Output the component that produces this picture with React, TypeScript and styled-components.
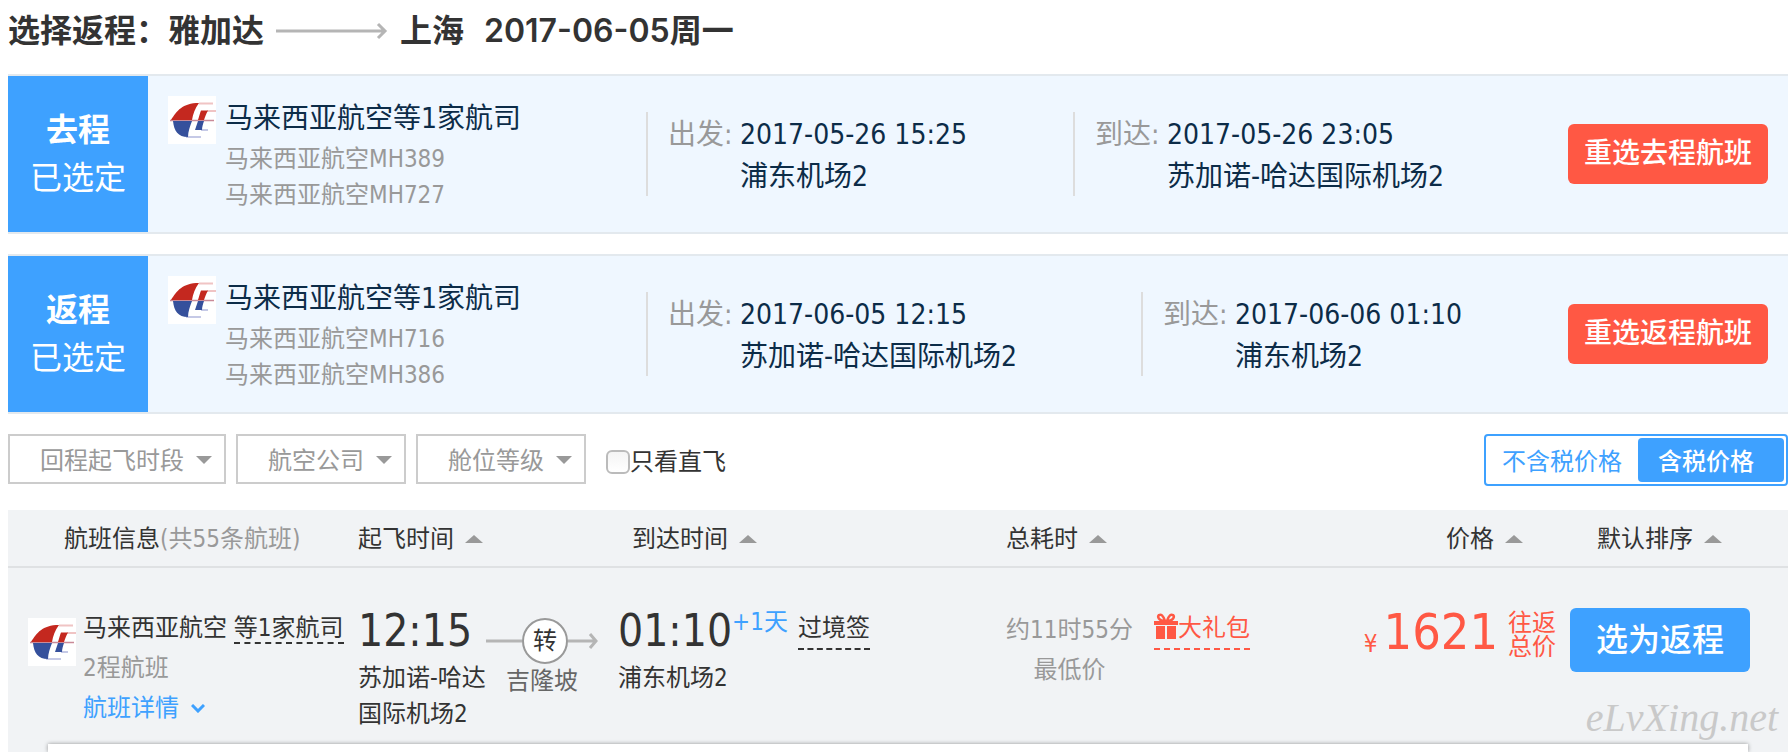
import React from 'react';
import styled, { createGlobalStyle } from 'styled-components';

const blue = '#3ea1ff';
const red = '#ff5844';
const navy = '#0c2c48';
const ink = '#333';
const muted = '#999';

const GlobalStyle = createGlobalStyle`
  * { box-sizing: border-box; }
  body {
    margin: 0;
    background: #fff;
    color: ${ink};
    font-family: 'DejaVu Sans Condensed', 'Noto Sans CJK SC', sans-serif;
    font-size: 24px;
    line-height: 36px;
  }
  button, select, input { font: inherit; margin: 0; }
  button { cursor: pointer; border: 0; }
  a { color: inherit; text-decoration: none; }
`;

const Page = styled.main`
  padding: 0 2px 0 8px;
`;

const Title = styled.h1`
  display: flex;
  align-items: center;
  gap: 12px;
  height: 62px;
  margin: 0 0 12px;
  font-family: Inter, 'Noto Sans CJK SC', sans-serif;
  font-size: 32px;
  font-weight: 600;
  white-space: nowrap;
`;

const TitleDate = styled.span`
  margin-left: 8px;
`;

const Leg = styled.section<{ $departure: number; $arrival: number }>`
  display: grid;
  grid-template-columns: 140px 498fr ${p => p.$departure}fr ${p => p.$arrival}fr 240px;
  align-items: center;
  height: 160px;
  margin-bottom: 20px;
  background: #eff7ff;
  border: solid #e3e9ee;
  border-width: 2px 0;
  color: ${navy};
  font-size: 28px;
  white-space: nowrap;
`;

const LegBadge = styled.div`
  display: flex;
  flex-direction: column;
  justify-content: center;
  height: 100%;
  background: ${blue};
  color: #fff;
  font-size: 32px;
  line-height: 48px;
  text-align: center;
`;

const Carrier = styled.div`
  display: flex;
  gap: 9px;
  padding-left: 20px;
  align-self: start;
  padding-top: 20px;
`;

const CarrierName = styled.div`
  line-height: 45px;
`;

const FlightNumber = styled.div`
  color: ${muted};
  font-size: 24px;
`;

const Stop = styled.dl`
  display: grid;
  grid-template-columns: 72px auto;
  grid-auto-rows: 42px;
  justify-content: start;
  height: 84px;
  margin: 0;
  padding: 2px 0 0 20px;
  border-left: 2px solid #ddd;
  line-height: 42px;
`;

const StopLabel = styled.dt`
  color: ${muted};
`;

const StopValue = styled.dd`
  margin: 0;
  grid-column: 2;
`;

const ReselectButton = styled.button`
  justify-self: center;
  width: 200px;
  height: 60px;
  padding: 0;
  border-radius: 6px;
  background: ${red};
  color: #fff;
  font-weight: 500;
`;

const Filters = styled.form`
  display: flex;
  align-items: flex-start;
  gap: 10px;
  margin-bottom: 20px;
`;

const SelectBox = styled.div<{ $wide?: boolean }>`
  position: relative;
  width: ${p => (p.$wide ? 218 : 170)}px;

  svg {
    position: absolute;
    right: 14px;
    top: 22px;
    pointer-events: none;
  }
`;

const Select = styled.select`
  appearance: none;
  width: 100%;
  height: 50px;
  padding: 4px 0 0 30px;
  border: 2px solid #ccc;
  border-radius: 0;
  background: #fff;
  color: ${muted};
`;

const DirectOnly = styled.label`
  display: flex;
  align-items: center;
  height: 56px;
  margin-left: 10px;
`;

const CheckBox = styled.input`
  appearance: none;
  width: 24px;
  height: 24px;
  border: 2px solid #bbb;
  border-radius: 6px;
  background: linear-gradient(#f4f4f4, #fff);

  &:checked { background: ${blue}; }
`;

const PriceMode = styled.div`
  display: flex;
  height: 52px;
  margin-left: auto;
  padding: 2px;
  border: 2px solid ${blue};
  border-radius: 4px;
`;

const PriceModeButton = styled.button<{ $active?: boolean }>`
  width: ${p => (p.$active ? 146 : 150)}px;
  padding: 3px 0 0 ${p => (p.$active ? 20 : 14)}px;
  border-radius: 4px;
  background: ${p => (p.$active ? blue : 'transparent')};
  color: ${p => (p.$active ? '#fff' : blue)};
  font-weight: ${p => (p.$active ? 500 : 400)};
  text-align: left;
`;

const Results = styled.section`
  position: relative;
  overflow: hidden;
  background: #f1f3f5;
`;

const FlightTable = styled.table`
  width: 100%;
  table-layout: fixed;
  border-collapse: separate;
  border-spacing: 0;
  white-space: nowrap;
`;

const HeadCell = styled.th<{ $indent?: number; $right?: boolean }>`
  height: 58px;
  padding: 2px ${p => (p.$right ? 39 : 0)}px 0 ${p => p.$indent ?? 0}px;
  border-bottom: 2px solid #dfe1e3;
  font-weight: 400;
  text-align: ${p => (p.$right ? 'right' : 'left')};
`;

const SortButton = styled.button`
  display: inline-flex;
  align-items: center;
  gap: 11px;
  padding: 0;
  background: none;
  color: inherit;
`;

const Count = styled.span`
  color: ${muted};
`;

const Cell = styled.td`
  height: 176px;
  padding: 40px 0 0;
  vertical-align: top;
`;

const CellRow = styled.div<{ $gap?: number; $indent?: number }>`
  display: flex;
  align-items: flex-start;
  gap: ${p => p.$gap ?? 0}px;
  padding-left: ${p => p.$indent ?? 0}px;
`;

const AirlineLogo = styled.svg`
  flex: none;
  width: 48px;
  height: 48px;
`;

const RowLogo = styled(AirlineLogo)`
  margin-top: 10px;
`;

const AirlineInfo = styled.div`
  line-height: 40px;
`;

const Dashed = styled.a<{ $tone?: string; $drop?: boolean }>`
  display: inline-block;
  color: ${p => p.$tone ?? ink};
  line-height: ${p => (p.$drop ? 40 : 28)}px;
  border-bottom: 2px dashed currentColor;
`;

const DetailsButton = styled.button`
  display: flex;
  align-items: center;
  gap: 12px;
  padding: 0;
  background: none;
  color: ${blue};
  line-height: 40px;
`;

const Time = styled.div`
  display: flex;
  align-items: flex-start;
  margin-bottom: 6px;
  font-size: 44px;
  line-height: 46px;
`;

const DayShift = styled.sup`
  color: ${blue};
  font-size: 24px;
  line-height: 28px;
`;

const Place = styled.div`
  width: 128px;
  white-space: normal;
`;

const Transfer = styled.div`
  display: flex;
  flex-direction: column;
  align-items: center;
  width: 112px;
  padding-top: 11px;
  color: #666;
`;

const TransferLine = styled.div`
  display: flex;
  align-items: center;
  height: 44px;
`;

const TransferDot = styled.span`
  display: grid;
  place-items: center;
  width: 46px;
  height: 46px;
  border: 2px solid ${muted};
  border-radius: 50%;
  background: #fff;
  color: ${ink};
`;

const Duration = styled.div`
  padding-top: 2px;
  color: ${muted};
  line-height: 40px;
  text-align: center;
`;

const Price = styled.div`
  display: flex;
  align-items: flex-start;
  justify-content: flex-end;
  padding-right: 6px;
  color: ${red};
`;

const Currency = styled.span`
  line-height: 72px;
`;

const Amount = styled.strong`
  margin: 0 10px 0 6px;
  font-size: 50px;
  font-weight: 400;
  line-height: 48px;
`;

const PriceNote = styled.span`
  width: 48px;
  padding-top: 3px;
  line-height: 24px;
  white-space: normal;
`;

const ChooseButton = styled.button`
  width: 180px;
  height: 64px;
  margin-left: 8px;
  border-radius: 6px;
  background: ${blue};
  color: #fff;
  font-size: 32px;
  font-weight: 500;
`;

const DetailsPanel = styled.div`
  height: 8px;
  margin: 0 40px;
  background: #fff;
  box-shadow: 0 0 4px rgba(0, 0, 0, 0.4);
`;

const Watermark = styled.span`
  position: absolute;
  right: 10px;
  bottom: 12px;
  color: #c9c9c9;
  font-family: 'Liberation Serif', serif;
  font-size: 40px;
  font-style: italic;
  line-height: 44px;
`;

const LogoDrawing = () => (
  <>
    <rect width="48" height="48" fill="#fff" />
    <path d="M31 7.500H45M39 15H48" stroke="#f0c4c4" strokeWidth="2" />
    <path d="M33 34H40M18 41H33" stroke="#c5c9e6" strokeWidth="2" />
    <path d="M2 24.500H46" stroke="#c98a98" strokeWidth="1.500" />
    <path d="M3 24C9 15 14 7 31 7C27 12 25 18 24 24Z" fill="#c4281f" />
    <path d="M5 25H24C22 30 20 36 20 41C10 41 6 35 5 25Z" fill="#35509c" />
    <path d="M33 14.500H40C38 18 37 21 36 24H30C31 21 32 17 33 14.500Z" fill="#c4281f" />
    <path d="M30 25H36C35 28 34 31 34 34H27C28 31 29 28 30 25Z" fill="#35509c" />
  </>
);

const LongArrow = () => (
  <svg width="112" height="20" viewBox="0 0 112 20" fill="none" stroke="#b5b5b5" strokeWidth="3">
    <path d="M0 10H109M102 3L109 10L102 17" />
  </svg>
);

const Caret = ({ up }: { up?: boolean }) => (
  <svg width={up ? 18 : 16} height="8" viewBox="0 0 16 8" preserveAspectRatio="none" fill={muted}>
    <path d={up ? 'M0 8L8 0L16 8Z' : 'M0 0L8 8L16 0Z'} />
  </svg>
);

const Gift = () => (
  <svg width="24" height="26" viewBox="0 0 24 26" fill={red}>
    <path d="M0 8H24V12H0ZM2 13H11V26H2ZM13 13H22V26H13Z" />
    <path d="M11 8C9 2 7 1 5 2C3 4 5 8 11 8ZM13 8C15 2 17 1 19 2C21 4 19 8 13 8Z" fill="none" stroke={red} strokeWidth="2.500" />
  </svg>
);

const GiftLink = styled(Dashed)`
  svg {
    display: inline-block;
    vertical-align: -3px;
  }
`;

const legs = [
  {
    name: '去程', flights: ['MH389', 'MH727'], columns: [427, 475],
    departure: ['2017-05-26 15:25', '浦东机场2'],
    arrival: ['2017-05-26 23:05', '苏加诺-哈达国际机场2'],
  },
  {
    name: '返程', flights: ['MH716', 'MH386'], columns: [495, 407],
    departure: ['2017-06-05 12:15', '苏加诺-哈达国际机场2'],
    arrival: ['2017-06-06 01:10', '浦东机场2'],
  },
];

const filters = ['回程起飞时段', '航空公司', '舱位等级'];

const columnWidths = [350, 260, 388, 340, 216, 226];

const StopInfo = ({ label, value }: { label: string; value: string[] }) => (
  <Stop>
    <StopLabel>{label}:</StopLabel>
    <StopValue>{value[0]}</StopValue>
    <StopValue>{value[1]}</StopValue>
  </Stop>
);

const Sort = ({ children }: { children: React.ReactNode }) => (
  <SortButton type="button">{children}<Caret up /></SortButton>
);

export default function App() {
  return (
    <Page>
      <GlobalStyle />
      <Title>
        <span>选择返程：雅加达</span>
        <LongArrow />
        <span>上海</span>
        <TitleDate>2017-06-05周一</TitleDate>
      </Title>

      {legs.map(leg => (
        <Leg key={leg.name} $departure={leg.columns[0]} $arrival={leg.columns[1]}>
          <LegBadge>
            <strong>{leg.name}</strong>
            <span>已选定</span>
          </LegBadge>
          <Carrier>
            <AirlineLogo viewBox="0 0 48 48"><LogoDrawing /></AirlineLogo>
            <div>
              <CarrierName>马来西亚航空等1家航司</CarrierName>
              {leg.flights.map(f => <FlightNumber key={f}>马来西亚航空{f}</FlightNumber>)}
            </div>
          </Carrier>
          <StopInfo label="出发" value={leg.departure} />
          <StopInfo label="到达" value={leg.arrival} />
          <ReselectButton type="button">重选{leg.name}航班</ReselectButton>
        </Leg>
      ))}

      <Filters>
        {filters.map((f, i) => (
          <SelectBox key={f} $wide={i === 0}>
            <Select aria-label={f}><option>{f}</option></Select>
            <Caret />
          </SelectBox>
        ))}
        <DirectOnly>
          <CheckBox type="checkbox" />
          只看直飞
        </DirectOnly>
        <PriceMode>
          <PriceModeButton type="button">不含税价格</PriceModeButton>
          <PriceModeButton type="button" $active>含税价格</PriceModeButton>
        </PriceMode>
      </Filters>

      <Results>
        <FlightTable>
          <colgroup>
            {columnWidths.map((w, i) => <col key={i} width={w} />)}
          </colgroup>
          <thead>
            <tr>
              <HeadCell $indent={56}>航班信息<Count>(共55条航班)</Count></HeadCell>
              <HeadCell><Sort>起飞时间</Sort></HeadCell>
              <HeadCell $indent={14}><Sort>到达时间</Sort></HeadCell>
              <HeadCell><Sort>总耗时</Sort></HeadCell>
              <HeadCell $right><Sort>价格</Sort></HeadCell>
              <HeadCell $indent={35}><Sort>默认排序</Sort></HeadCell>
            </tr>
          </thead>
          <tbody>
            <tr>
              <Cell>
                <CellRow $gap={7} $indent={20}>
                  <RowLogo viewBox="0 0 48 48"><LogoDrawing /></RowLogo>
                  <AirlineInfo>
                    <div>马来西亚航空 <Dashed href="#airlines">等1家航司</Dashed></div>
                    <Count>2程航班</Count>
                    <DetailsButton type="button">
                      航班详情
                      <svg width="14" height="9" viewBox="0 0 14 9" fill="none" stroke={blue} strokeWidth="3">
                        <path d="M1 1L7 7L13 1" />
                      </svg>
                    </DetailsButton>
                  </AirlineInfo>
                </CellRow>
              </Cell>
              <Cell>
                <CellRow>
                  <div>
                    <Time>12:15</Time>
                    <Place>苏加诺-哈达国际机场2</Place>
                  </div>
                  <Transfer>
                    <TransferLine>
                      <svg width="36" height="16" viewBox="0 0 36 16" stroke="#b5b5b5" strokeWidth="3"><path d="M0 8H36" /></svg>
                      <TransferDot>转</TransferDot>
                      <svg width="30" height="16" viewBox="0 0 30 16" fill="none" stroke="#b5b5b5" strokeWidth="3"><path d="M0 8H28M22 1L28 8L22 15" /></svg>
                    </TransferLine>
                    吉隆坡
                  </Transfer>
                </CellRow>
              </Cell>
              <Cell>
                <CellRow $gap={10}>
                  <div>
                    <Time>01:10<DayShift>+1天</DayShift></Time>
                    <Place>浦东机场2</Place>
                  </div>
                  <Dashed href="#transit" $drop>过境签</Dashed>
                </CellRow>
              </Cell>
              <Cell>
                <CellRow $gap={21}>
                  <Duration>约11时55分<br />最低价</Duration>
                  <GiftLink href="#gift" $tone={red} $drop><Gift />大礼包</GiftLink>
                </CellRow>
              </Cell>
              <Cell>
                <Price>
                  <Currency>¥</Currency>
                  <Amount>1621</Amount>
                  <PriceNote>往返总价</PriceNote>
                </Price>
              </Cell>
              <Cell>
                <ChooseButton type="button">选为返程</ChooseButton>
              </Cell>
            </tr>
          </tbody>
        </FlightTable>
        <DetailsPanel />
        <Watermark>eLvXing.net</Watermark>
      </Results>
    </Page>
  );
}
